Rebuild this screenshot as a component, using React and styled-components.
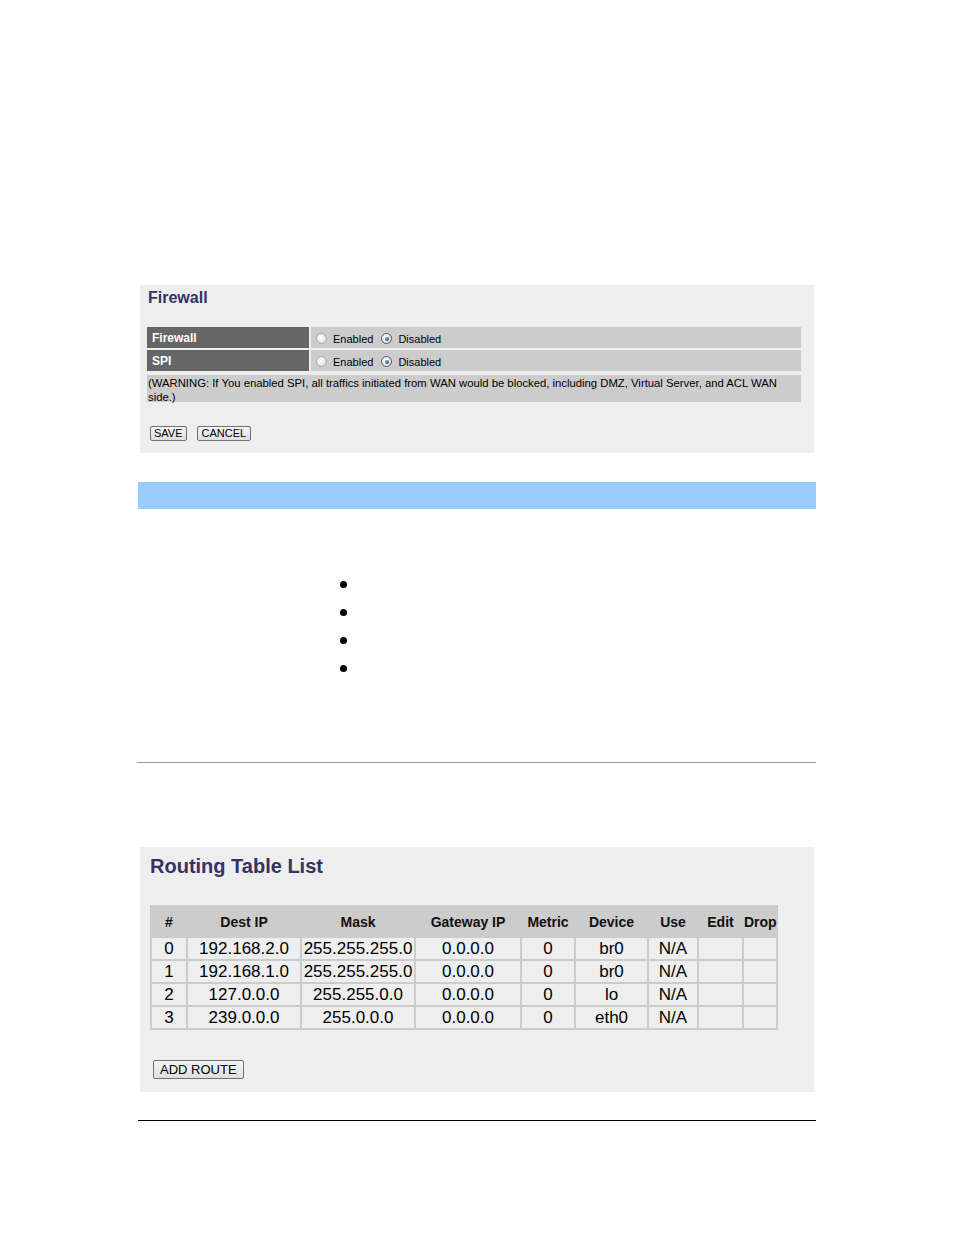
import React from "react";
import styled, { createGlobalStyle } from "styled-components";

const GlobalStyle = createGlobalStyle`
  html, body {
    margin: 0;
    padding: 0;
    background: #ffffff;
    font-family: "Liberation Sans", Arial, sans-serif;
  }
`;

const Page = styled.div`
  width: 954px;
  min-height: 1235px;
  padding-top: 285px;
  box-sizing: border-box;
  display: flex;
  flex-direction: column;
`;

// PANELS //

const Panel = styled.section`
  margin-left: 140px;
  margin-top: ${(p) => p.$top || 0}px;
  width: 674px;
  height: ${(p) => p.$height}px;
  box-sizing: border-box;
  background-color: #eeeeee;
  padding: ${(p) => p.$pad};
  display: flex;
  flex-direction: column;
`;

const PanelTitle = styled.div`
  font-size: ${(p) => p.$size}px;
  line-height: ${(p) => p.$line}px;
  font-weight: bold;
  color: #333366;
  padding-left: ${(p) => p.$indent || 0}px;
`;

// FIREWALL SECTION //

const FormRows = styled.div`
  margin-top: 20px;
  display: grid;
  grid-template-columns: 162px 1fr;
  grid-auto-rows: 21px;
  gap: 2px;
`;

const LabelCell = styled.div`
  background-color: #666666;
  color: #ffffff;
  font-size: 12px;
  font-weight: bold;
  padding-left: 5px;
  display: flex;
  align-items: center;
`;

const ValueCell = styled.div`
  background-color: #cccccc;
  color: #000000;
  font-size: 11px;
  padding-left: 5px;
  padding-top: 2px;
  display: flex;
  align-items: center;
`;

const Radio = styled.span`
  width: 9px;
  height: 9px;
  border-radius: 50%;
  border: 1px solid ${(p) => (p.$on ? "#4d5a66" : "#a8a8a8")};
  background: radial-gradient(circle at 40% 40%, #ffffff 0%, #e2e2e2 70%, #cfcfcf 100%);
  display: flex;
  align-items: center;
  justify-content: center;
  margin-right: 6px;
  margin-left: ${(p) => p.$gap || 0}px;

  &::after {
    content: "";
    width: 4px;
    height: 4px;
    border-radius: 50%;
    background: ${(p) =>
      p.$on ? "radial-gradient(circle at 35% 35%, #7fb6e6 0%, #1d4f80 70%, #0f2a48 100%)" : "transparent"};
  }
`;

const Warning = styled.div`
  margin-top: 4px;
  background-color: #cccccc;
  color: #000000;
  font-size: 11.3px;
  line-height: 14px;
  height: 27px;
  box-sizing: border-box;
  padding: 1px 20px 0 1px;
`;

const ButtonRow = styled.div`
  margin-top: 24px;
  padding-left: 3px;
  display: flex;
  gap: 10px;
`;

const Button = styled.button`
  font-family: "Liberation Sans", Arial, sans-serif;
  font-size: ${(p) => p.$size || 11}px;
  height: ${(p) => p.$h || 15}px;
  padding: 0 ${(p) => p.$px || 3}px;
  border: 1px solid #707070;
  border-radius: 2px;
  background: linear-gradient(#f6f6f6, #dedede);
  color: #000000;
  line-height: 1;
  cursor: pointer;
`;

// MIDDLE //

const BlueBar = styled.div`
  margin-top: 29px;
  margin-left: 138px;
  width: 678px;
  height: 27px;
  background-color: #99ccff;
`;

const BulletList = styled.ul`
  list-style: none;
  margin: 61px 0 0 0;
  padding: 0 0 0 340px;
`;

const Bullet = styled.li`
  height: 28px;
  display: flex;
  align-items: center;

  &::before {
    content: "";
    width: 7px;
    height: 7px;
    border-radius: 50%;
    background: #000000;
  }
`;

const Rule = styled.hr`
  margin: ${(p) => p.$top}px 0 0 ${(p) => p.$left}px;
  width: ${(p) => p.$width}px;
  height: 0;
  border: none;
  border-top: 1px solid ${(p) => p.$color};
`;

// ROUTING SECTION //

const RouteTable = styled.table`
  margin-top: 27px;
  background-color: #cccccc;
  border-collapse: separate;
  border-spacing: 2px;
  table-layout: fixed;
  width: 628px;
`;

const HeadCell = styled.th`
  height: 29px;
  padding: 0;
  font-size: 14px;
  font-weight: bold;
  color: #111111;
  text-align: center;
  white-space: nowrap;
  overflow: visible;
`;

const DataCell = styled.td`
  height: 21px;
  padding: 1px 0 0 0;
  box-sizing: border-box;
  background-color: #eeeeee;
  font-size: 17px;
  color: #000000;
  text-align: center;
  white-space: nowrap;
  line-height: 20px;
`;

const columns = [
  { label: "#", width: 34 },
  { label: "Dest IP", width: 112 },
  { label: "Mask", width: 112 },
  { label: "Gateway IP", width: 104 },
  { label: "Metric", width: 52 },
  { label: "Device", width: 71 },
  { label: "Use", width: 48 },
  { label: "Edit", width: 43 },
  { label: "Drop", width: 32 },
];

const routes = [
  ["0", "192.168.2.0", "255.255.255.0", "0.0.0.0", "0", "br0", "N/A", "", ""],
  ["1", "192.168.1.0", "255.255.255.0", "0.0.0.0", "0", "br0", "N/A", "", ""],
  ["2", "127.0.0.0", "255.255.0.0", "0.0.0.0", "0", "lo", "N/A", "", ""],
  ["3", "239.0.0.0", "255.0.0.0", "0.0.0.0", "0", "eth0", "N/A", "", ""],
];

const AddRow = styled.div`
  margin-top: 30px;
  padding-left: 3px;
  display: flex;
`;

const FirewallRow = ({ label }) => (
  <>
    <LabelCell>{label}</LabelCell>
    <ValueCell>
      <Radio />
      Enabled
      <Radio $on $gap={8} />
      Disabled
    </ValueCell>
  </>
);

const App = () => {
  return (
    <>
      <GlobalStyle />
      <Page>
        <Panel $height={168} $pad="3px 13px 0 7px">
          <PanelTitle $size={16} $line={20} $indent={1}>
            Firewall
          </PanelTitle>
          <FormRows style={{ marginTop: 19 }}>
            <FirewallRow label="Firewall" />
            <FirewallRow label="SPI" />
          </FormRows>
          <Warning>
            (WARNING: If You enabled SPI, all traffics initiated from WAN would be blocked, including DMZ,
            Virtual Server, and ACL WAN side.)
          </Warning>
          <ButtonRow>
            <Button>SAVE</Button>
            <Button $px={4}>CANCEL</Button>
          </ButtonRow>
        </Panel>

        <BlueBar />

        <BulletList>
          <Bullet />
          <Bullet />
          <Bullet />
          <Bullet />
        </BulletList>

        <Rule $top={80} $left={137} $width={679} $color="#999999" />

        <Panel $top={84} $height={245} $pad="7px 10px 0 10px">
          <PanelTitle $size={20} $line={24}>
            Routing Table List
          </PanelTitle>
          <RouteTable>
            <colgroup>
              {columns.map((c) => (
                <col key={c.label} style={{ width: c.width }} />
              ))}
            </colgroup>
            <thead>
              <tr>
                {columns.map((c) => (
                  <HeadCell key={c.label}>{c.label}</HeadCell>
                ))}
              </tr>
            </thead>
            <tbody>
              {routes.map((r) => (
                <tr key={r[0]}>
                  {r.map((v, i) => (
                    <DataCell key={i}>{v}</DataCell>
                  ))}
                </tr>
              ))}
            </tbody>
          </RouteTable>
          <AddRow>
            <Button $size={13} $h={19} $px={6}>
              ADD ROUTE
            </Button>
          </AddRow>
        </Panel>

        <Rule $top={28} $left={138} $width={678} $color="#000000" />
      </Page>
    </>
  );
};

export default App;
